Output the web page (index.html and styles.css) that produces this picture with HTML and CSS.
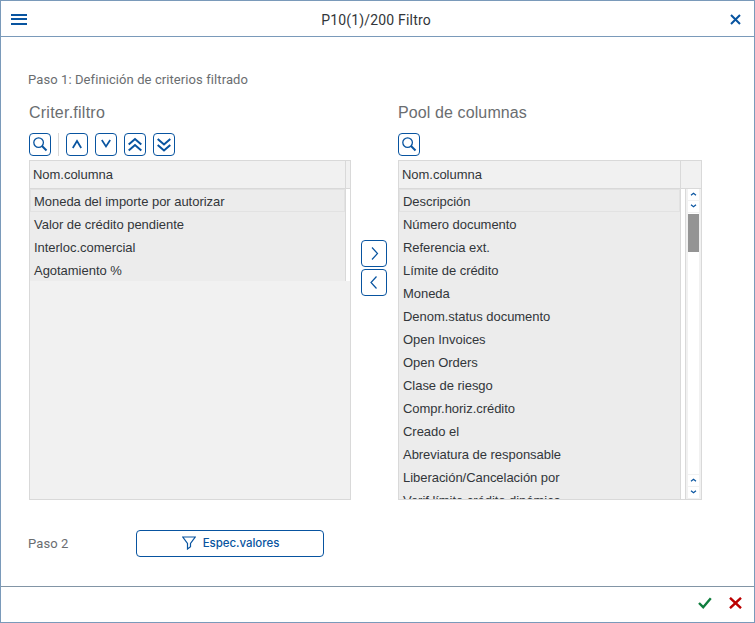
FILE: index.html
```html
<!DOCTYPE html>
<html lang="es">
<head>
<meta charset="utf-8">
<title>P10(1)/200 Filtro</title>
<link rel="stylesheet" href="styles.css">
</head>
<body>
<div class="window">
  <header class="titlebar">
    <svg class="menu" width="16" height="11" viewBox="0 0 16 11"><path d="M0 1h16M0 5h16M0 10h16" stroke-width="2"/></svg>
    <h1>P10(1)/200 Filtro</h1>
    <svg class="close" width="11" height="11" viewBox="0 0 11 11"><path d="M1 1l9 9M10 1l-9 9" stroke-width="2"/></svg>
  </header>
  <main>
    <p class="step one">Paso 1: Definición de criterios filtrado</p>
    <div class="lists">
      <section class="criteria">
        <h2>Criter.filtro</h2>
        <div class="tools">
          <button><svg width="20" height="21" viewBox="0 0 20 21"><circle cx="8.6" cy="8.600" r="4.800" stroke-width="1.300"/><path d="M12 12l4.500 4.500" stroke-width="2"/></svg></button>
          <i></i>
          <button><svg width="20" height="21" viewBox="0 0 20 21"><path d="M5.800 14l4.200-7 4.200 7" stroke-width="1.700"/></svg></button>
          <button><svg width="20" height="21" viewBox="0 0 20 21"><path d="M5.800 6l4.200 6.500 4.200-6.500" stroke-width="1.700"/></svg></button>
          <button><svg width="20" height="21" viewBox="0 0 20 21"><path d="M3.700 10.500l6.300-5.500 6.300 5.500M3.700 16.500l6.300-5.500 6.300 5.500" stroke-width="2"/></svg></button>
          <button><svg width="20" height="21" viewBox="0 0 20 21"><path d="M3.700 5l6.300 5.500 6.300-5.500M3.700 11l6.300 5.500 6.300-5.500" stroke-width="2"/></svg></button>
        </div>
        <div class="table">
          <div class="head"><span>Nom.columna</span></div>
          <div class="content">
            <ul>
              <li>Moneda del importe por autorizar</li>
              <li>Valor de crédito pendiente</li>
              <li>Interloc.comercial</li>
              <li>Agotamiento %</li>
            </ul>
            <div class="gap"></div>
          </div>
        </div>
      </section>
      <div class="move">
        <button><svg width="24" height="25" viewBox="0 0 24 25"><path d="M10 6.500l5.500 6-5.500 6" stroke-width="1.200"/></svg></button>
        <button><svg width="24" height="25" viewBox="0 0 24 25"><path d="M14.500 6.500l-5.500 6 5.500 6" stroke-width="1.200"/></svg></button>
      </div>
      <section class="pool">
        <h2>Pool de columnas</h2>
        <div class="tools">
          <button><svg width="20" height="21" viewBox="0 0 20 21"><circle cx="8.600" cy="8.600" r="4.800" stroke-width="1.300"/><path d="M12 12l4.500 4.500" stroke-width="2"/></svg></button>
        </div>
        <div class="table">
          <div class="head"><span>Nom.columna</span></div>
          <div class="content">
            <ul>
              <li>Descripción</li>
              <li>Número documento</li>
              <li>Referencia ext.</li>
              <li>Límite de crédito</li>
              <li>Moneda</li>
              <li>Denom.status documento</li>
              <li>Open Invoices</li>
              <li>Open Orders</li>
              <li>Clase de riesgo</li>
              <li>Compr.horiz.crédito</li>
              <li>Creado el</li>
              <li>Abreviatura de responsable</li>
              <li>Liberación/Cancelación por</li>
              <li>Verif.límite crédito dinámica</li>
            </ul>
            <div class="gap"></div>
            <div class="scroll">
              <div class="arrow"><svg width="7" height="4" viewBox="0 0 7 4"><path d="M1 3.200l2.500-2 2.500 2" stroke-width="1.200"/></svg></div>
              <div class="arrow"><svg width="7" height="4" viewBox="0 0 7 4"><path d="M1 .8l2.500 2 2.500-2" stroke-width="1.200"/></svg></div>
              <div class="track"><div class="thumb"></div></div>
              <div class="arrow"><svg width="7" height="4" viewBox="0 0 7 4"><path d="M1 3.200l2.500-2 2.500 2" stroke-width="1.200"/></svg></div>
              <div class="arrow"><svg width="7" height="4" viewBox="0 0 7 4"><path d="M1 .8l2.500 2 2.500-2" stroke-width="1.200"/></svg></div>
            </div>
          </div>
        </div>
      </section>
    </div>
    <div class="second">
      <p class="step">Paso 2</p>
      <button class="values"><svg width="14" height="14" viewBox="0 0 14 14"><path d="M.8 1h12.400L8.500 7.500v3.200L5.500 13V7.500z" stroke-width="1.200"/></svg><span>Espec.valores</span></button>
    </div>
  </main>
  <footer>
    <svg class="ok" width="14" height="12" viewBox="0 0 14 12"><path d="M1 6l4.200 4.200L12.800 1.200" stroke-width="2.400"/></svg>
    <svg class="cancel" width="13" height="12" viewBox="0 0 13 12"><path d="M1 .8l11 10.400M12 .8L1 11.200" stroke-width="2.400"/></svg>
  </footer>
</div>
</body>
</html>
```
FILE: styles.css
```css
* { box-sizing: border-box; margin: 0; padding: 0; }
body { background: #fff; font-family: "Liberation Sans", Arial, sans-serif; color: #32363a; }
svg { display: block; fill: none; stroke: #0854a0; flex: none; }
.window { width: 755px; height: 623px; border: 1px solid #7a9aba; display: flex; flex-direction: column; }
.titlebar { height: 36px; border-bottom: 1px solid #7a9aba; display: flex; align-items: center; justify-content: space-between; padding: 2px 13px 0 10px; }
h1 { font: 400 14px/20px Roboto, sans-serif; letter-spacing: .18px; padding-right: 5px; }
main { flex: 1; padding: 33px 0 0 27px; }
.step { font: 400 13px/20px Roboto, sans-serif; color: #6a6d70; letter-spacing: .09px; }
.step.one { height: 32px; }
.lists { display: flex; height: 398px; padding-left: 1px; }
h2 { font-weight: 400; font-size: 16px; line-height: 22px; color: #6a6d70; height: 31px; letter-spacing: .24px; }
.criteria { width: 322px; }
.pool { width: 304px; }
.pool h2 { letter-spacing: .11px; }
.tools { display: flex; gap: 7px; height: 27px; }
.tools i { width: 1px; height: 23px; background: #d9d9d9; }
button { border: 1px solid #0854a0; border-radius: 4px; background: #fff; color: #0854a0; width: 22px; height: 23px; flex: none; }
.table { height: 340px; border: 1px solid #d9d9d9; background: #f1f1f1; font-size: 13px; letter-spacing: -.03px; overflow: hidden; }
.head { height: 28px; border-bottom: 1px solid #d9d9d9; display: flex; }
.head span { width: 316px; padding-left: 3px; line-height: 27px; border-right: 1px solid #d9d9d9; }
.pool .head span { width: 282px; }
.content { display: flex; }
.pool .content { height: 310px; }
ul { list-style: none; width: 316px; background: #ececec; border-right: 1px solid #d9d9d9; }
.pool ul { width: 282px; height: 310px; overflow: hidden; }
.pool li { letter-spacing: -.04px; }
li { height: 23px; line-height: 25px; padding-left: 4px; white-space: nowrap; }
li:first-child { border: 1px solid #e2e2e2; padding-left: 3px; line-height: 23px; }
.gap { width: 4px; background: #fff; }
.scroll { width: 16px; height: 310px; border-left: 1px solid #d9d9d9; background: #f1f1f1; padding: 0 2px 1px; display: flex; flex-direction: column; gap: 1px; }
.arrow { height: 11px; background: #fff; display: flex; align-items: center; justify-content: center; padding-bottom: 2px; }
.track { flex: 1; background: #fff; padding-top: 1px; }
.thumb { height: 38px; background: #949494; }
.move { width: 47px; padding: 138px 0 0 10px; display: flex; flex-direction: column; gap: 2px; }
.move button { width: 26px; height: 27px; }
.second { display: flex; align-items: center; height: 27px; margin-top: 30px; }
.second .step { width: 108px; }
.values { width: 188px; height: 27px; display: flex; align-items: center; justify-content: center; gap: 7px; font: 500 11.5px/20px Inter, sans-serif; padding: 0 0 1px 1px; letter-spacing: -.05px; }
footer { height: 36px; border-top: 1px solid #8295a6; display: flex; align-items: center; justify-content: flex-end; gap: 17px; padding: 0 12px 4px 0; }
.ok { stroke: #107e3e; }
.cancel { stroke: #bb0000; }
```
